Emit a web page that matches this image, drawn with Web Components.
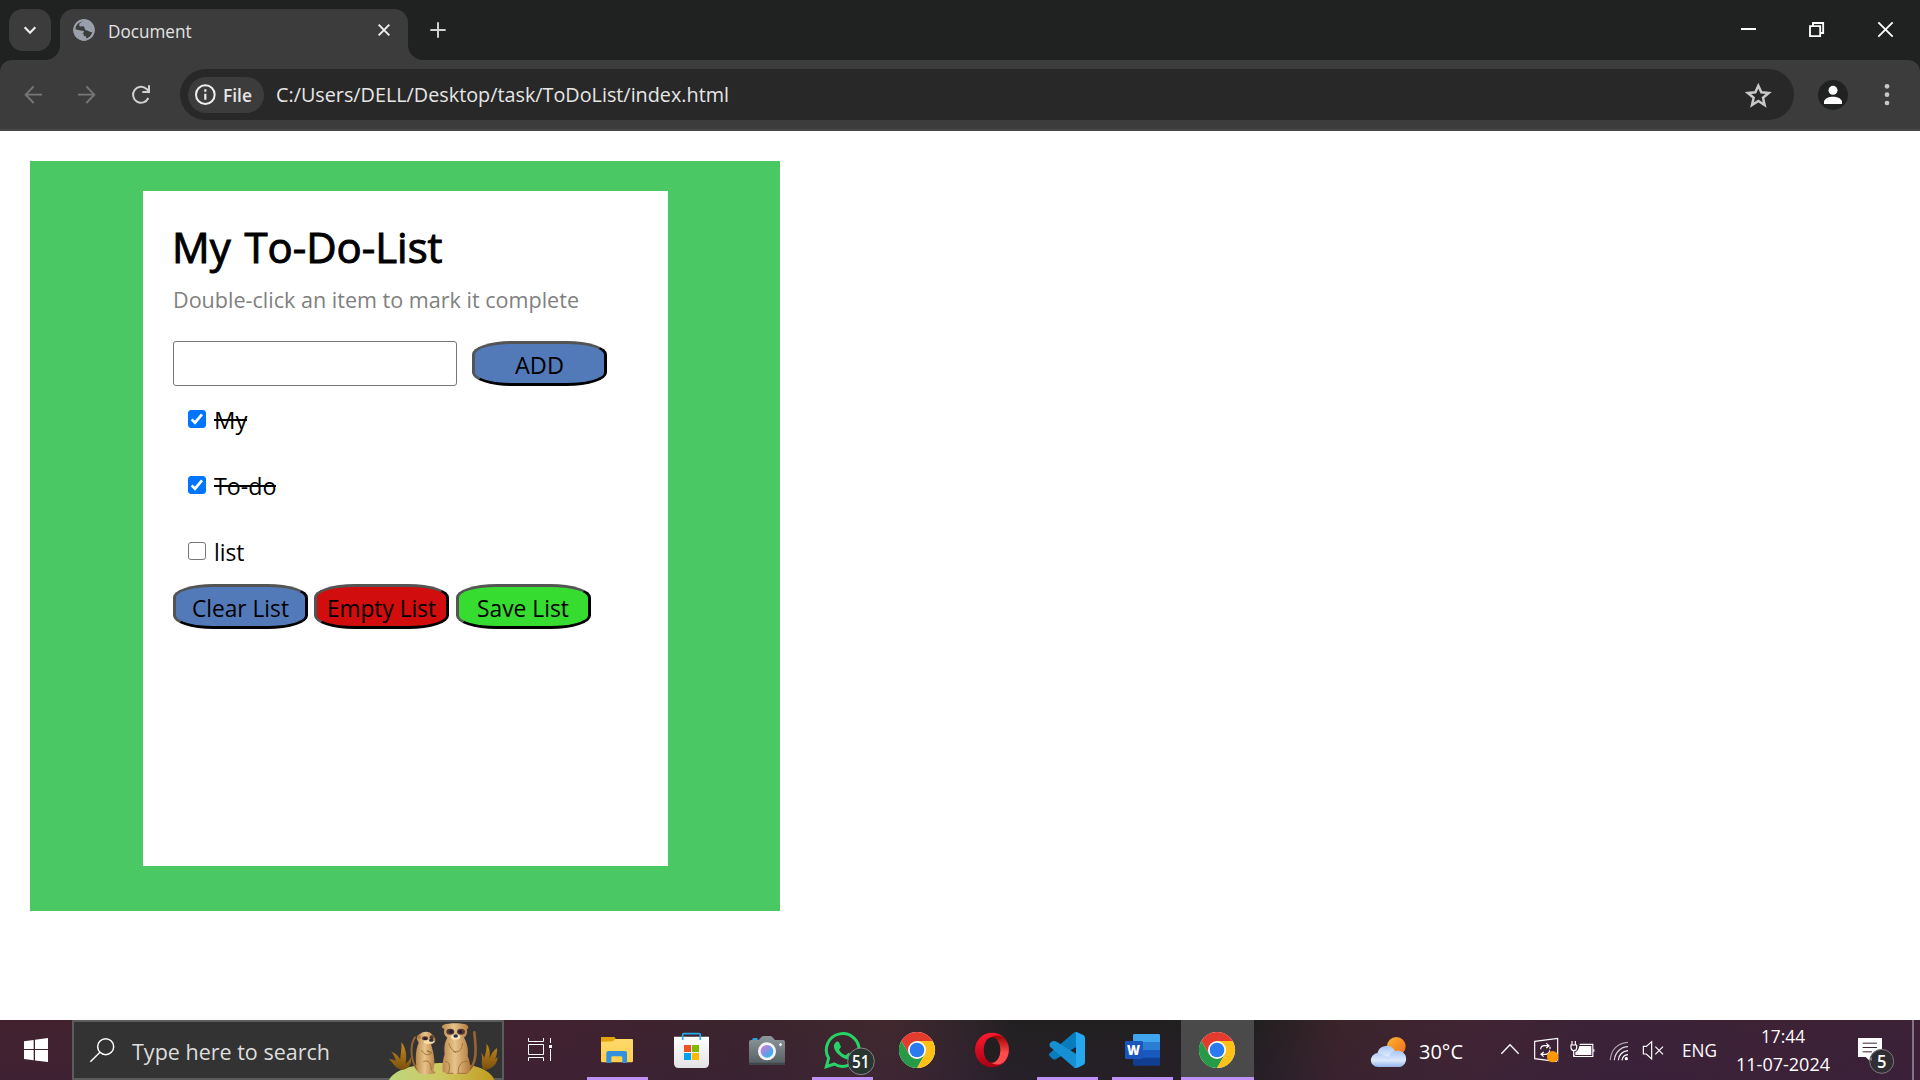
<!DOCTYPE html>
<html lang="en">
<head>
<meta charset="utf-8">
<title>Document</title>
<style>
html,body{margin:0;height:100%;background:#fff;overflow:hidden}
body{font-family:"Open Sans","Noto Sans",sans-serif;display:flex;flex-direction:column;width:1920px;height:1080px}
</style>
</head>
<body>
<browser-chrome></browser-chrome>
<todo-page></todo-page>
<task-bar></task-bar>
<script>
// Icons: [viewBox at three units per pixel, markup]
const CHROME = (cx,cy)=>`<g transform="translate(${cx} ${cy})">
<circle r="54" fill="#fff"/>
<path d="M-46.8 -27A54 54 0 0 1 46.8 -27H0L-23.4 13.5Z" fill="#e33b2e"/>
<path d="M-46.8 -27A54 54 0 0 0 0 54L23.4 13.5H-23.4Z" fill="#269a46"/>
<path d="M46.8 -27A54 54 0 0 1 0 54L23.4 13.5L0 -27Z" fill="#fdc117"/>
<circle r="27" fill="#fff"/><circle r="22" fill="#2a7af0"/></g>`;
const ICONS = {
 down:["27 27 126 126",`<path d="M74 82L90 98L106 82" fill="none" stroke="#eee" stroke-width="6.5"/>`],
 globe:["216 54 72 72",`<circle cx="252" cy="90" r="32" fill="#9aa0a9"/><path d="M254 62C244 64 236 70 238 77C242 82 248 77 252 80C256 84 252 90 260 91C266 92 268 98 277 96C275 106 268 113 259 116L258 109C252 109 250 106 251 101C246 102 244 98 238 98C230 97 226 90 226 84C228 72 240 63 254 62Z" fill="#3c3c3c"/><path d="M225 88L250 93C256 95 248 99 246 104L247 118C234 117 225 105 225 88Z" fill="#9aa0a9"/><circle cx="252" cy="90" r="29.5" fill="none" stroke="#9aa0a9" stroke-width="5"/>`],
 tabclose:["1128 66 48 48",`<path d="M1136 74L1168 106M1168 74L1136 106" stroke="#eee" stroke-width="6"/>`],
 plus:["1287 0 54 180",`<path d="M1291 90H1337M1314 67V113" stroke="#d0d0d0" stroke-width="6"/>`],
 back:["60 180 78 210",`<path d="M126 284H78M101 259L77 284L101 309" fill="none" stroke="#777" stroke-width="5.5"/>`],
 fwd:["222 180 78 210",`<path d="M234 284H282M259 259L283 284L259 309" fill="none" stroke="#777" stroke-width="5.5"/>`],
 reload:["384 180 78 210",`<path d="M445 294A24 24 0 1 1 440 267L446 273" fill="none" stroke="#d0d0d0" stroke-width="6"/><path d="M427 276H447V256" fill="none" stroke="#d0d0d0" stroke-width="6"/>`],
 info:["582 249 69 69",`<circle cx="616" cy="284" r="28" fill="none" stroke="#eee" stroke-width="6"/><path d="M616 281V299M616 268V275" stroke="#eee" stroke-width="6.5"/>`],
 star:["254 240 80 84",`<path d="M294 254L303 274L325 276L308 290L313 312L294 300L275 312L280 290L263 276L285 274Z" fill="none" stroke="#c8c8c8" stroke-width="7.5"/>`],
 user:["474 180 90 210",`<circle cx="519" cy="285" r="45" fill="#202221"/><circle cx="519" cy="271" r="13.5" fill="#fff"/><path d="M492 312V304C496 293 508 290 519 290S542 293 546 304V312Z" fill="#fff"/>`],
 dots:["672 180 18 210",`<g fill="#c8c8c8"><circle cx="681" cy="259" r="7"/><circle cx="681" cy="284" r="7"/><circle cx="681" cy="309" r="7"/></g>`],
 min:["243 0 45 180",`<path d="M243 87H288" stroke="#fff" stroke-width="6"/>`],
 restore:["444 0 51 180",`<path d="M450 78.500H480.500V108.500H450ZM459 78V69H489.500V99H481" fill="none" stroke="#fff" stroke-width="5.500"/>`],
 close:["651 0 51 180",`<path d="M655 67L698 110M698 67L655 110" stroke="#fff" stroke-width="5.500"/>`],
 win:["72 30 72 180",`<path d="M72 94L101 90V117H72ZM105 89.500L144 84V117H105ZM72 120H101V151L72 147ZM105 120H144V156L105 151.500Z" fill="#fff"/>`],
 search:["267 30 78 180",`<circle cx="317" cy="110" r="24" fill="none" stroke="#fff" stroke-width="4.500"/><path d="M300 127L271 155" stroke="#fff" stroke-width="4.500"/>`],
 taskview:["471 30 78 180",`<g fill="none" stroke="#fff" stroke-width="3"><path d="M475.500 84V94.500H520.500V84M475.500 103.500H520.500V133.500H475.500ZM475.500 153V142.500H520.500V153M541.500 84V99M541.500 117V153"/></g><path d="M537 105H546V114H537Z" fill="#fff"/>`],
 meerkats:["54 30 345 180",`<defs><linearGradient id="hill"><stop offset="0" stop-color="#bcd67c"/><stop offset=".5" stop-color="#cfc862"/><stop offset="1" stop-color="#c19a1d"/></linearGradient><linearGradient id="fur"><stop offset="0" stop-color="#bd894c"/><stop offset=".45" stop-color="#e6c48b"/><stop offset="1" stop-color="#b37b3e"/></linearGradient><linearGradient id="leaf" x2="0" y2="1"><stop offset="0" stop-color="#cb8c1d"/><stop offset="1" stop-color="#79500f"/></linearGradient></defs>
 <path d="M60 210C78 174 150 160 226 159C304 159 362 174 376 210Z" fill="url(#hill)"/>
 <g fill="url(#leaf)"><path d="M103 179C84 166 101 119 97 96C116 118 115 158 103 179ZM99 177C78 166 82 138 66 125C88 131 98 149 101 178ZM100 179C80 178 70 156 59 146C78 148 96 160 103 178ZM103 179C106 155 121 158 125 141C131 158 121 175 103 179ZM344 179C337 150 357 125 352 101C370 119 363 160 346 180ZM347 180C360 164 360 129 384 114C387 137 373 169 347 180ZM345 180C332 160 344 143 336 128C349 140 354 165 345 180ZM349 180C357 162 374 152 386 141C386 165 364 178 349 180Z"/></g>
 <path d="M148 182C125 158 121 106 138 82" fill="none" stroke="#966331" stroke-width="6" stroke-linecap="round"/>
 <path d="M293 183C327 168 321 112 316 67" fill="none" stroke="#966331" stroke-width="8" stroke-linecap="round"/>
 <path d="M150 97C138 118 137 166 148 188C162 196 185 194 200 189L193 181C200 157 194 128 186 103Z" fill="url(#fur)"/>
 <path d="M146 92C140 84 145 75 153 72C164 62 184 64 190 74C200 82 203 95 194 99C182 108 162 110 150 100Z" fill="url(#fur)"/><circle cx="150" cy="81" r="6" fill="#b57b46"/><path d="M165 86Q178 93 194 90Q200 96 191 100Q176 105 165 99Z" fill="#f5dba6"/>
 <ellipse cx="168" cy="85" rx="9" ry="6" fill="#57362d"/><ellipse cx="188" cy="82" rx="6" ry="6" fill="#57362d"/><ellipse cx="169" cy="86" rx="4" ry="3.5" fill="#22192f"/><ellipse cx="187" cy="91" rx="7" ry="4.5" fill="#27293c"/>
 <path d="M157 120C167 137 178 137 188 129M163 155C179 148 187 160 187 181" fill="none" stroke="#a57339" stroke-width="3"/><path d="M174 122L188 129" stroke="#9a6c3b" stroke-width="4"/>
 <path d="M235 82C224 104 226 118 227 132C221 150 219 170 221 185C238 195 279 194 299 189C306 178 304 155 296 138C300 112 291 94 284 80Z" fill="url(#fur)"/>
 <path d="M226 56C217 55 216 47 224 44C237 38 281 38 293 44C301 50 298 57 294 57C298 80 283 88 260 90C236 87 220 78 226 56Z" fill="url(#fur)"/>
 <ellipse cx="244" cy="65" rx="12" ry="9" fill="#533735"/><ellipse cx="276" cy="65" rx="12" ry="9" fill="#533735"/><circle cx="246" cy="65" r="5" fill="#22192f"/><circle cx="274" cy="65" r="5" fill="#22192f"/><ellipse cx="260" cy="81" rx="14" ry="8" fill="#f9e4b9"/><ellipse cx="260" cy="78" rx="7" ry="5" fill="#273043"/>
 <path d="M239 100C245 117 252 121 261 128M281 99C278 121 270 128 252 125M229 154C243 155 244 174 238 188M299 154C276 151 266 169 268 188M233 190H253M264 190H294" fill="none" stroke="#a77437" stroke-width="3"/>`],
 explorer:["90 30 102 180",`<defs><linearGradient id="fold" x2="0" y2="1"><stop offset="0" stop-color="#ffda70"/><stop offset="1" stop-color="#ffcf4c"/></linearGradient></defs><path d="M93 84Q93 81 96 81H132L137 87H186Q189 87 189 90V153Q189 157 185 157H97Q93 157 93 153Z" fill="url(#fold)"/><path d="M93 95V84Q93 81 96 81H132Q137 84 136 88L128 94Z" fill="#e2a30b"/><path d="M109 159V128Q109 123 115 123H166Q171 123 171 128V159H157V142Q157 139 153 139H128Q124 139 124 142V159Z" fill="#3390dc"/>`],
 store:["309 30 114 180",`<defs><linearGradient id="bag" x2="0" y2="1"><stop offset="0" stop-color="#fff"/><stop offset="1" stop-color="#e3e3e4"/></linearGradient></defs><path d="M312 80H417V160Q417 174 403 174H326Q312 174 312 160Z" fill="url(#bag)"/><path d="M338 90V74Q338 71 342 71H387Q391 71 391 74V90" fill="none" stroke="#22aceb" stroke-width="5"/><path d="M342 105H363V126H342Z" fill="#f25022"/><path d="M366 105H387V126H366Z" fill="#7fba00"/><path d="M342 129H363V150H342Z" fill="#00a4ef"/><path d="M366 129H387V150H366Z" fill="#ffb900"/>`],
 camera:["534 30 114 180",`<defs><linearGradient id="body" x2="0" y2="1"><stop offset="0" stop-color="#8d979c"/><stop offset="1" stop-color="#535c61"/></linearGradient><linearGradient id="lens" x2="1" y2="1"><stop offset=".2" stop-color="#b980d8"/><stop offset=".9" stop-color="#25b5f4"/></linearGradient></defs><path d="M547 90V87Q548 84 552 84H560Q564 84 564 90Z" fill="#2a9fe1"/><path d="M537 96Q537 90 543 90H566L574 81Q577 78 581 78H600Q604 78 607 81L615 90H639Q645 90 645 96V165H537Z" fill="url(#body)"/><path d="M537 158H645V165H537Z" fill="#3f474b"/><circle cx="591" cy="124" r="27" fill="#f4f5f7"/><circle cx="591" cy="124" r="19" fill="url(#lens)"/><path d="M627 104H636M631.500 99V109" stroke="#e7ecee" stroke-width="4"/>`],
 whatsapp:["759 30 156 180",`<path d="M766 170L773 145A49 49 0 1 1 790 162Z" fill="none" stroke="#25d366" stroke-width="9"/><path d="M797 95Q801 93 804 97L810 111L804 119Q810 131 825 136L832 128L844 134Q848 138 843 143C833 155 814 145 802 133C788 119 783 103 797 95Z" fill="#25d366"/><circle cx="870" cy="154" r="40" fill="#293531" stroke="#858586" stroke-width="3"/>`],
 chrome:["54 30 114 180",CHROME(111,120)],
 opera:["282 30 108 180",`<defs><linearGradient id="op" x2="0" y2="1"><stop offset="0" stop-color="#ff1b2d"/><stop offset="1" stop-color="#a70014"/></linearGradient><linearGradient id="op2" x2="0" y2="1"><stop offset="0" stop-color="#9c0000"/><stop offset=".6" stop-color="#ff4b4b"/></linearGradient></defs><ellipse cx="336" cy="120" rx="51" ry="52" fill="url(#op)"/><path d="M319 92Q347 67 370 82A51 52 0 0 1 370 158Q347 173 319 148Q334 164 349 151Q361 140 361 120T349 90Q334 77 319 92Z" fill="url(#op2)"/><ellipse cx="336" cy="120" rx="25" ry="38" fill="#211f20"/>`],
 code:["504 30 114 180",`<path d="M583 67L602 76V103L530 146Q522 151 517 146L508 137Q505 133 510 129Z" fill="#087dbd"/><path d="M510 99L517 94Q522 91 530 95L602 140V165L584 174L510 110Q506 104 510 99Z" fill="#168fd3"/><path d="M585 67Q590 65 595 68L611 76Q615 79 615 84V156Q615 161 611 164L596 172Q590 175 583 173Q588 171 588 164V76Q588 69 585 67Z" fill="#26a8ef"/>`],
 word:["729 30 111 180",`<path d="M756 76Q756 72 760 72H833Q837 72 837 76V97H756Z" fill="#41a5ee"/><path d="M756 96H837V120H756Z" fill="#2b7cd3"/><path d="M756 120H837V144H756Z" fill="#185abd"/><path d="M756 143H837V163Q837 167 833 167H760Q756 167 756 163Z" fill="#103f91"/><rect x="732" y="93" width="54" height="54" rx="4" fill="#1a55bb"/>`],
 weather:["90 30 114 180",`<defs><linearGradient id="sun" x2="1" y2="1"><stop offset="0" stop-color="#fdb632"/><stop offset="1" stop-color="#ef681c"/></linearGradient><linearGradient id="cloud" x2="0" y2="1"><stop offset="0" stop-color="#a7c5f5"/><stop offset=".6" stop-color="#dce9fc"/><stop offset="1" stop-color="#91b3ec"/></linearGradient></defs><circle cx="169" cy="109" r="28" fill="url(#sun)"/><path d="M112 130A28 28 0 0 1 165 124L160 156H115Z" fill="url(#cloud)"/><path d="M115 171A22 21 0 1 1 124 131Q137 136 147 148Q145 125 171 122A25 25 0 0 1 180 171Z" fill="url(#cloud)"/>`],
 chevron:["480 30 60 180",`<path d="M484 131L510 104L536 131" fill="none" stroke="#fff" stroke-width="4"/>`],
 update:["579 30 78 180",`<path d="M584 94L653 85V155L584 146Z" fill="none" stroke="#fff" stroke-width="3.500"/><path d="M602 118Q602 107 614 107H626M619 100L627 107L619 114M630 110V118M629 121Q628 133 616 133H604M611 126L603 133L611 140" fill="none" stroke="#fff" stroke-width="3.500"/><path d="M638 123A17 17 0 1 0 638 157A17 17 0 1 0 638 123Z" fill="#ff9800"/><path d="M655 148V160H640Q651 158 655 148Z" fill="#3f2236"/>`],
 battery:["687 30 78 180",`<path d="M702 135V139.500H758.500V103H719" fill="none" stroke="#fff" stroke-width="3.500"/><path d="M718 108H754V135H706V126Q716 123 718 108ZM760 117H763V126H760Z" fill="#fff"/><path d="M696 93V104M706 93V104M691 105H711M693 105V113Q694 122 701 122Q710 122 710 113V105M701 122V140" fill="none" stroke="#fff" stroke-width="3.500"/>`],
 wifi:["807 30 60 180",`<g fill="none" stroke-width="3.500"><path d="M811 151C812 120 833 98 864 97" stroke="#aaa0aa"/><path d="M823 151C824 129 842 110 864 110" stroke="#ddd8dd"/><path d="M835 151C836 134 848 123 864 122M846 151C847 143 853 135 864 134" stroke="#fff"/></g><circle cx="859" cy="146" r="5" fill="#fff"/>`],
 mute:["66 30 66 180",`<path d="M70 109H79L95 95V147L79 132H70Z" fill="none" stroke="#fff" stroke-width="3.500"/><path d="M106 110L129 133M129 110L106 133" stroke="#fff" stroke-width="3.500"/>`],
 note:["711 30 114 180",`<path d="M714 84H786V141H756V160L737 141H714Z" fill="#fff"/><path d="M728 99.500H771M728 112.500H771M728 125.500H756" stroke="#3e2235" stroke-width="3"/><circle cx="785" cy="154" r="36" fill="#302e32" stroke="#7d787e" stroke-width="3"/><path d="M756 141V154L749 148Q750 143 756 141Z" fill="#777"/>`]
};
class UiIcon extends HTMLElement{
 connectedCallback(){
  const [vb,body]=ICONS[this.getAttribute('name')],v=vb.split(' ').map(Number);
  this.attachShadow({mode:'open'}).innerHTML=`<style>:host{display:block;flex:none;width:${v[2]/3}px;height:${v[3]/3}px}svg{display:block}</style><svg width="${v[2]/3}" height="${v[3]/3}" viewBox="${vb}">${body}</svg>`;
 }
}
customElements.define('ui-icon',UiIcon);

// A single line of text condensed or widened to a given advance width
class FitText extends HTMLElement{
 connectedCallback(){
  const w=+this.getAttribute('w'),r=this.attachShadow({mode:'open'});
  r.innerHTML=`<style>:host{display:block;flex:none;width:${w}px;white-space:nowrap}span{display:inline-block;transform-origin:0 50%}</style><span><slot></slot></span>`;
  const s=r.querySelector('span'),n=s.getBoundingClientRect().width;
  if(n)s.style.transform=`scaleX(${w/n})`;
 }
}
customElements.define('fit-text',FitText);

const define=(name,html)=>customElements.define(name,class extends HTMLElement{
 connectedCallback(){ if(!this.shadowRoot) this.attachShadow({mode:'open'}).innerHTML=html; }
});

define('browser-tab',`<style>
:host{display:flex;box-sizing:border-box;width:348px;height:51px;background:#3c3c3c;border-radius:14px 14px 0 0;position:relative;padding:0 16px 0 12px;color:#e3e3e3;font-size:17.5px;line-height:24px}
:host::before,:host::after{content:"";position:absolute;bottom:0;width:15px;height:15px}
:host::before{left:-15px;background:radial-gradient(circle at 0 0,transparent 14.5px,#3c3c3c 15.5px)}
:host::after{right:-15px;background:radial-gradient(circle at 100% 0,transparent 14.5px,#3c3c3c 15.5px)}
ui-icon{margin-top:9px}fit-text{margin:10px auto 0 12px}ui-icon[name=tabclose]{margin-top:13px}
</style><ui-icon name="globe"></ui-icon><fit-text w="83.5"><slot></slot></fit-text><ui-icon name="tabclose"></ui-icon>`);

define('address-bar',`<style>
:host{display:flex;box-sizing:border-box;width:1614px;height:51px;margin:9px 0 0 26px;border-radius:26px;background:#282828;padding:0 22.500px 0 8px;align-items:center;color:#e6e6e6}
.chip{display:flex;align-items:center;width:76px;height:36px;box-sizing:border-box;border-radius:18px;background:#3c3c3c;padding-left:6px;font-size:17.5px;line-height:24px;font-weight:600}
.chip fit-text{margin-left:5.500px}
.url{margin:-2px auto 0 11.500px;font-size:20.500px;line-height:28px}
</style><div class="chip"><ui-icon name="info"></ui-icon><fit-text w="29">File</fit-text></div><fit-text class="url" w="453">C:/Users/DELL/Desktop/task/ToDoList/index.html</fit-text><ui-icon name="star"></ui-icon>`);

define('browser-chrome',`<style>
:host{display:flex;flex-direction:column;flex:none;height:131px;background:#202221}
.strip{display:flex;height:60px}
.menu{width:42px;height:42px;margin:9px 9px 0;border-radius:14px;background:#3c3c3c}
browser-tab{margin-top:9px}
.strip ui-icon[name=plus]{margin:0 auto 0 21px}
ui-icon[name=min]{margin-right:52px}ui-icon[name=restore]{margin-right:52px}ui-icon[name=close]{margin-right:26px}
.bar{display:flex;box-sizing:border-box;height:71px;padding-left:20px;background:#3c3c3c;border-bottom:2px solid #474747;border-radius:12px 12px 0 0/12px 12px 0 0}
ui-icon[name=back],ui-icon[name=fwd]{margin-right:28px}
ui-icon[name=user]{margin:0 36px 0 24px}
</style>
<div class="strip"><div class="menu"><ui-icon name="down"></ui-icon></div><browser-tab>Document</browser-tab><ui-icon name="plus"></ui-icon><ui-icon name="min"></ui-icon><ui-icon name="restore"></ui-icon><ui-icon name="close"></ui-icon></div>
<div class="bar"><ui-icon name="back"></ui-icon><ui-icon name="fwd"></ui-icon><ui-icon name="reload"></ui-icon><address-bar></address-bar><ui-icon name="user"></ui-icon><ui-icon name="dots"></ui-icon></div>`);

define('list-button',`<style>
:host{display:block;flex:none}
button{display:flex;justify-content:center;box-sizing:border-box;width:135px;height:45px;margin:0;padding:5px 1px 0 0;border:3px outset #000;border-color:#545454 #000 #000 #545454;border-radius:30%;background:var(--fill,#527ab8);font:400 23px/32px "Open Sans","Noto Sans",sans-serif;color:#000}
</style><button><slot></slot></button>`);

define('todo-item',`<style>
:host{display:flex;height:66px;padding-left:15px;align-items:flex-start}
.box{box-sizing:border-box;width:18px;height:18px;border:1px solid #767676;border-radius:3px;background:#fff}
:host([done]) .box{background:#0075ff;border-color:#0075ff}
svg{display:none;margin:-1px}:host([done]) svg{display:block}
slot{display:block;margin:-5px 0 0 7.500px;line-height:30px;font-size:23px}
:host([done]) slot{background:linear-gradient(#000,#000) 0 14px/100% 2px no-repeat}
</style><div class="box"><svg width="18" height="18" viewBox="0 0 54 54"><path d="M11 28L21 38L42 13" fill="none" stroke="#fff" stroke-width="8"/></svg></div><slot></slot>`);

define('todo-page',`<style>
:host{display:block;flex:1;background:#fff;padding:30px}
.green{box-sizing:border-box;width:750px;height:750px;background:#4ac864;padding:30px 0 0 113px}
.card{box-sizing:border-box;width:525px;height:675px;background:#fff;padding:27px 30px;color:#000}
h1{margin:0 0 0 -1px;font-size:42px;line-height:58px;font-weight:400;-webkit-text-stroke:1px #000;word-spacing:3px}
p{margin:8px 0 0 -.5px;font-size:22.500px;line-height:32px;color:#808080}
.add{display:flex;gap:15px;margin:25px 0 24px}
input{box-sizing:border-box;width:284px;height:45px;margin:0;border:1px solid #767676;border-radius:3px;background:#fff;outline:0}
.items{height:174px}
.actions{display:flex;gap:6px}
</style>
<div class="green"><div class="card">
<h1><fit-text w="270.5">My To-Do-List</fit-text></h1>
<p><fit-text w="406">Double-click an item to mark it complete</fit-text></p>
<div class="add"><input type="text" aria-label="Item"><list-button><fit-text w="49">ADD</fit-text></list-button></div>
<div class="items"><todo-item done><fit-text w="33.500">My</fit-text></todo-item><todo-item done><fit-text w="62.500">To-do</fit-text></todo-item><todo-item><fit-text w="30.500">list</fit-text></todo-item></div>
<div class="actions"><list-button><fit-text w="97">Clear List</fit-text></list-button><list-button style="--fill:#d20d0d"><fit-text w="109">Empty List</fit-text></list-button><list-button style="--fill:#37dc31;margin-left:1px"><fit-text w="92">Save List</fit-text></list-button></div>
</div></div>`);

define('task-button',`<style>
:host{display:flex;flex:none;box-sizing:border-box;width:73px;height:60px;margin:0 1px;padding-right:1px;justify-content:center;position:relative}
:host([active]){background:#4b4a4b}
:host([open])::after{content:"";position:absolute;left:6px;right:6px;bottom:0;height:3px;background:#bf91f8}
:host([active])::after{left:0;right:0}
</style><slot></slot>`);

define('search-box',`<style>
:host{display:flex;flex:none;box-sizing:border-box;width:432px;height:60px;border:2px solid #5c5c5c;background:#333;color:#dedede;font-size:22.500px;line-height:30px}
ui-icon{margin-top:-2px}ui-icon[name=search]{margin-left:15px}fit-text{margin:15px auto 0 17px}
ui-icon[name=meerkats]{margin-right:0}
</style><ui-icon name="search"></ui-icon><fit-text w="198">Type here to search</fit-text><ui-icon name="meerkats"></ui-icon>`);

define('task-bar',`<style>
:host{display:flex;flex:none;height:60px;color:#fff;background:linear-gradient(#40182500,#35204040),linear-gradient(90deg,#42222e 0,#41222f 560px,#3b242d 740px,#41282e 890px,#30242a 965px,#222021 1010px,#211f20 1255px,#3b242a 1340px,#412433 1480px,#3a2238 1620px,#3e2236 1750px,#3c2137 1920px)}
ui-icon[name=win]{margin:0 24px}
task-button:first-of-type{width:74px}
.num{position:absolute;color:#fff;font-weight:600;font-size:17.500px;line-height:20px}
.w{position:absolute;left:20.500px;top:19px;font-size:14px;line-height:22px;font-weight:800;color:#fff}
.t{font-size:20.500px;line-height:28px;margin-top:17px}
.s{font-size:17.500px;line-height:24px}
.clock{display:flex;flex-direction:column;align-items:center;gap:4px;margin:4px 0 0 19px;width:94px}
.tray{display:flex;margin-left:auto}
.note{position:relative;display:flex;margin-left:27px}
.edge{width:2px;height:60px;background:#827482;margin:0 6px 0 17.500px}
</style>
<ui-icon name="win"></ui-icon><search-box></search-box>
<task-button><ui-icon name="taskview" style="margin-right:3px"></ui-icon></task-button>
<task-button open><ui-icon name="explorer"></ui-icon></task-button>
<task-button><ui-icon name="store"></ui-icon></task-button>
<task-button><ui-icon name="camera"></ui-icon></task-button>
<task-button open><ui-icon name="whatsapp" style="margin-left:15px"></ui-icon><fit-text class="num" w="17.5" style="left:46px;top:31px">51</fit-text></task-button>
<task-button><ui-icon name="chrome"></ui-icon></task-button>
<task-button><ui-icon name="opera"></ui-icon></task-button>
<task-button open><ui-icon name="code"></ui-icon></task-button>
<task-button open><ui-icon name="word"></ui-icon><fit-text class="w" w="13">W</fit-text></task-button>
<task-button open active><ui-icon name="chrome"></ui-icon></task-button>
<div class="tray">
<ui-icon name="weather"></ui-icon><fit-text class="t" w="44" style="margin-left:11px">30°C</fit-text>
<ui-icon name="chevron" style="margin-left:37px"></ui-icon><ui-icon name="update" style="margin-left:13px"></ui-icon><ui-icon name="battery" style="margin-left:10px"></ui-icon><ui-icon name="wifi" style="margin-left:14px"></ui-icon><ui-icon name="mute" style="margin-left:13px"></ui-icon>
<fit-text class="s" w="35" style="margin:18px 0 0 17.5px">ENG</fit-text>
<div class="clock"><fit-text class="s" w="44">17:44</fit-text><fit-text class="s" w="94">11-07-2024</fit-text></div>
<div class="note"><ui-icon name="note"></ui-icon><fit-text class="num" w="9.500" style="left:20px;top:31px">5</fit-text></div><div class="edge"></div>
</div>`);
</script>
</body>
</html>
